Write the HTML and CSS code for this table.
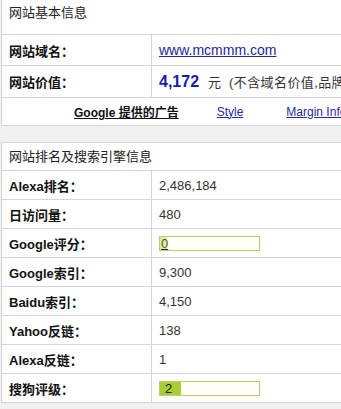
FILE: index.html
```html
<!DOCTYPE html>
<html lang="zh-CN">
<head>
<meta charset="utf-8">
<title>网站基本信息</title>
<link rel="stylesheet" href="styles.css">
</head>
<body>
<div class="page">
  <section class="panel">
    <div class="panel-title first">网站基本信息</div>
    <div class="row r1">
      <div class="label">网站域名：</div>
      <div class="value"><a class="site-link" href="#">www.mcmmm.com</a></div>
    </div>
    <div class="row r2">
      <div class="label">网站价值：</div>
      <div class="value"><span class="price">4,172</span><span class="unit">元</span><span class="note">(不含域名价值,品牌价值)</span></div>
    </div>
    <div class="ads">
      <a class="ads-title" href="#">Google 提供的广告</a>
      <a class="ads-link" href="#">Style</a>
      <a class="ads-link" href="#">Margin Info</a>
    </div>
  </section>

  <section class="panel second">
    <div class="panel-title">网站排名及搜索引擎信息</div>
    <div class="row">
      <div class="label">Alexa排名：</div>
      <div class="value">2,486,184</div>
    </div>
    <div class="row">
      <div class="label">日访问量：</div>
      <div class="value">480</div>
    </div>
    <div class="row">
      <div class="label">Google评分：</div>
      <div class="value"><div class="bar"><span class="fill zero"><span class="num pr">0</span></span></div></div>
    </div>
    <div class="row">
      <div class="label">Google索引：</div>
      <div class="value">9,300</div>
    </div>
    <div class="row">
      <div class="label">Baidu索引：</div>
      <div class="value">4,150</div>
    </div>
    <div class="row">
      <div class="label">Yahoo反链：</div>
      <div class="value">138</div>
    </div>
    <div class="row">
      <div class="label">Alexa反链：</div>
      <div class="value">1</div>
    </div>
    <div class="row">
      <div class="label">搜狗评级：</div>
      <div class="value"><div class="bar"><span class="fill" style="width:21px"><span class="num">2</span></span></div></div>
    </div>
  </section>
</div>
</body>
</html>
```

FILE: styles.css
```css
html, body {
  margin: 0;
  padding: 0;
  background: #f1f1f1;
}
body {
  width: 341px;
  height: 409px;
  overflow: hidden;
  font-family: "Liberation Sans", Arial, "Noto Sans CJK SC", sans-serif;
  font-size: 13px;
  color: #222;
}
.page {
  padding-left: 1px;
  width: 420px;
}
.panel {
  background: #fff;
  border-left: 1px solid #d6d6d6;
}
.panel.second {
  margin-top: 16px;
  border-top: 1px solid #d6d6d6;
}
.panel-title {
  height: 27px;
  line-height: 27px;
  padding-left: 7px;
  font-size: 13px;
  color: #222;
  border-bottom: 1px solid #d6d6d6;
}
.panel-title.first {
  height: 30px;
  line-height: 18px;
  padding-top: 4px;
}
.row {
  display: flex;
  height: 28px;
  border-bottom: 1px solid #d6d6d6;
}
.row.r1 { height: 30px; }
.row.r2 { height: 31px; }
.label {
  width: 150px;
  flex: none;
  display: flex;
  align-items: center;
  padding-left: 7px;
  box-sizing: border-box;
  border-right: 1px solid #d6d6d6;
  font-weight: bold;
  color: #111;
}
.value {
  display: flex;
  align-items: center;
  padding-left: 7px;
  white-space: nowrap;
  color: #333;
}
.site-link {
  color: #26269a;
  font-size: 14px;
}
.price {
  color: #1c1ca8;
  font-weight: bold;
  font-size: 16px;
  margin-right: 9px;
}
.unit {
  margin-right: 8px;
}
.note {
  letter-spacing: 0.4px;
}
.ads {
  display: flex;
  align-items: center;
  height: 27px;
  border-bottom: 1px solid #d6d6d6;
  padding-left: 72px;
  white-space: nowrap;
  font-size: 12px;
}
.ads-title {
  color: #111;
  font-weight: bold;
  margin-right: 38px;
}
.ads-link {
  color: #2a2aa6;
  margin-right: 43px;
}
.bar {
  width: 99px;
  height: 13px;
  border: 1px solid #bfcb7a;
  background: #fffff6;
  display: flex;
}
.fill {
  background: #a8cd36;
  display: flex;
  align-items: center;
  height: 13px;
}
.fill.zero {
  background: #dfe8a8;
  width: 7px;
}
.num {
  font-size: 13px;
  line-height: 13px;
  color: #222;
  padding-left: 5px;
}
.num.pr {
  padding-left: 1px;
  color: #5a5a10;
  text-decoration: underline;
  text-decoration-color: #223;
}
```
